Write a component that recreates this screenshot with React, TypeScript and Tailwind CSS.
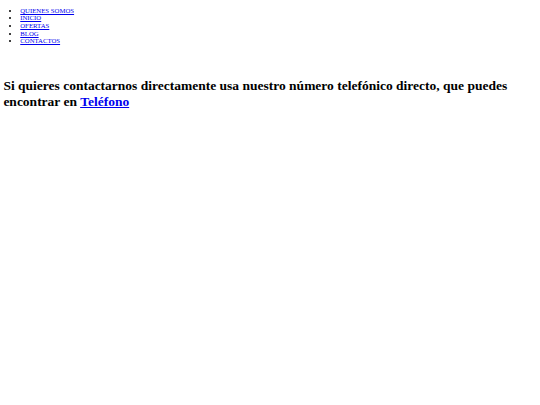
export default function App() {
  const items = ["QUIENES SOMOS", "INICIO", "OFERTAS", "BLOG", "CONTACTOS"];
  return (
    <div
      className="min-h-[405px] bg-white px-[3.375px] pt-[6.75px] text-black"
      style={{ fontFamily: '"Liberation Serif", "Times New Roman", serif' }}
    >
      <ul className="list-disc pl-[16.875px] text-[6.75px] leading-[7.6px]">
        {items.map((t) => (
          <li key={t}>
            <a href="#" className="text-[#0000ee] underline">
              {t}
            </a>
          </li>
        ))}
      </ul>
      <h1 className="mt-[32.8px] text-[13.5px] font-bold leading-[normal]">
        Si quieres contactarnos directamente usa nuestro número telefónico directo, que puedes encontrar en{" "}
        <a href="#" className="text-[#0000ee] underline">
          Teléfono
        </a>
      </h1>
    </div>
  );
}
